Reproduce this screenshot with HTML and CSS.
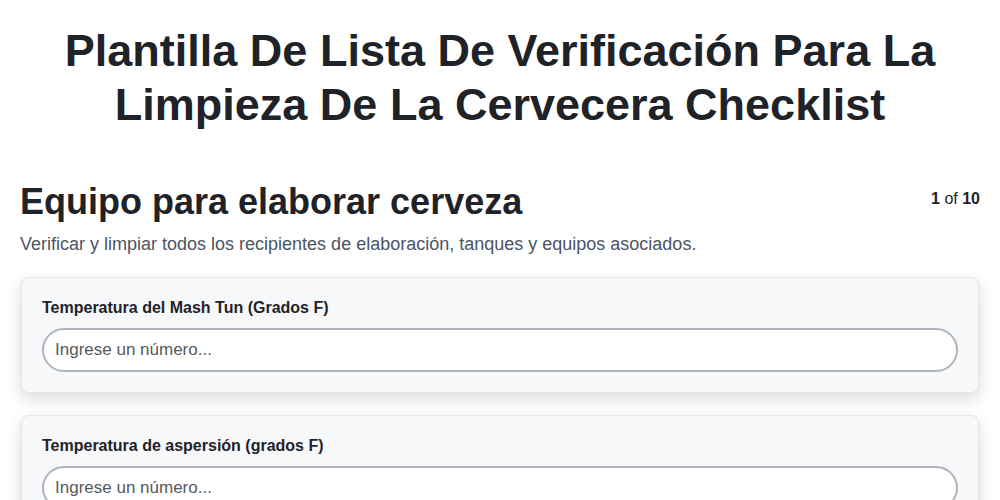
FILE: index.html
```html
<!DOCTYPE html>
<html lang="es">
<head>
<meta charset="utf-8">
<title>Checklist</title>
<link rel="stylesheet" href="styles.css">
</head>
<body>
<div class="page">
  <h1 class="title">Plantilla De Lista De Verificación Para La Limpieza De La Cervecera Checklist</h1>
  <div class="section-head">
    <h2 class="section-title">Equipo para elaborar cerveza</h2>
    <div class="counter"><b>1</b> of <b>10</b></div>
  </div>
  <p class="section-desc">Verificar y limpiar todos los recipientes de elaboración, tanques y equipos asociados.</p>
  <div class="cards">
    <div class="card">
      <label class="card-label">Temperatura del Mash Tun (Grados F)</label>
      <input class="card-input" type="text" placeholder="Ingrese un número...">
    </div>
    <div class="card">
      <label class="card-label">Temperatura de aspersión (grados F)</label>
      <input class="card-input" type="text" placeholder="Ingrese un número...">
    </div>
  </div>
</div>
</body>
</html>
```
FILE: styles.css
```css
* { box-sizing: border-box; }
html, body { margin: 0; padding: 0; background: #fff; }
body { font-family: "Liberation Sans", Arial, sans-serif; color: #1f2328; }
.page { padding: 24px 20px 0 20px; }
.title {
  margin: 0;
  text-align: center;
  font-size: 45px;
  line-height: 54px;
  font-weight: 700;
  color: #1f2328;
  padding: 0 40px;
}
.section-head {
  display: flex;
  justify-content: space-between;
  align-items: flex-start;
  margin-top: 48px;
}
.section-title {
  margin: 0;
  font-size: 36px;
  line-height: 44px;
  font-weight: 700;
}
.counter {
  font-size: 16px;
  line-height: 20px;
  padding-top: 9px;
  color: #1f2328;
}
.section-desc {
  margin: 9px 0 0 0;
  font-size: 18px;
  line-height: 22px;
  color: #4b5563;
}
.cards {
  display: flex;
  flex-direction: column;
  gap: 22px;
  margin-top: 22px;
  padding: 0 1px;
}
.card {
  background: #f7f8fa;
  border: 1px solid #e5e7eb;
  border-radius: 8px;
  box-shadow: 0 6px 16px rgba(0,0,0,0.15);
  padding: 20px 20px 20px 20px;
  display: flex;
  flex-direction: column;
}
.card-label {
  font-size: 16px;
  line-height: 20px;
  font-weight: 700;
  color: #1f2328;
  margin-bottom: 10px;
}
.card-input {
  width: 100%;
  height: 44px;
  border: 2px solid #adb4bc;
  border-radius: 22px;
  background: #fff;
  padding: 0 11px;
  font-family: "Liberation Sans", Arial, sans-serif;
  font-size: 17px;
  color: #333;
  outline: none;
}
.card-input::placeholder { color: #555a60; }
```
